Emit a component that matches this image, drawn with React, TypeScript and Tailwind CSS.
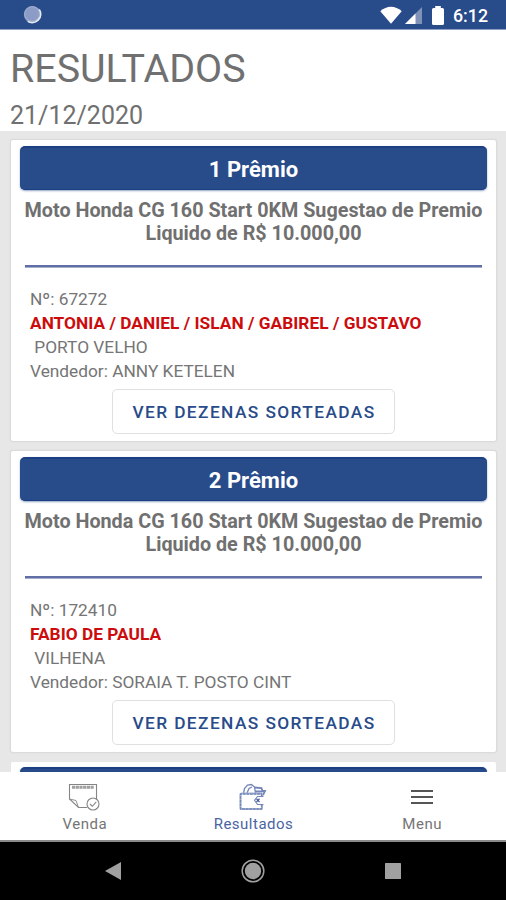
import type { ReactNode } from "react";

type Premio = {
  titulo: string;
  descricao: string[];
  numero: string;
  ganhador: string;
  cidade: string;
  vendedor: string;
};

const premios: Premio[] = [
  {
    titulo: "1 Prêmio",
    descricao: ["Moto Honda CG 160 Start 0KM Sugestao de Premio", "Liquido de R$ 10.000,00"],
    numero: "67272",
    ganhador: "ANTONIA / DANIEL / ISLAN / GABIREL / GUSTAVO",
    cidade: "PORTO VELHO",
    vendedor: "ANNY KETELEN",
  },
  {
    titulo: "2 Prêmio",
    descricao: ["Moto Honda CG 160 Start 0KM Sugestao de Premio", "Liquido de R$ 10.000,00"],
    numero: "172410",
    ganhador: "FABIO DE PAULA",
    cidade: "VILHENA",
    vendedor: "SORAIA T. POSTO CINT",
  },
];

function StatusBar() {
  return (
    <div className="flex h-[30px] shrink-0 items-center justify-between border-b border-[#8f9fc6] bg-[#284b8a] pl-[23px] pr-[18px] text-white">
      <svg width="19" height="19" viewBox="0 0 19 19">
        <circle cx="9.5" cy="9.5" r="8.6" fill="#8b9cc6" />
        <path d="M16.2 4.5A8.4 8.4 0 0 1 4.8 16.3" fill="none" stroke="#e6eaf4" strokeWidth="1.8" />
        <circle cx="9" cy="9" r="7.4" fill="none" stroke="#a9b6d5" strokeWidth="0.8" />
      </svg>
      <div className="flex items-center pt-px">
        <svg width="22" height="18" viewBox="0 0 22 18" fill="#fff">
          <path d="M0.3 5.2C6.5-.8 15.5-.8 21.7 5.2L11 17.8Z" />
        </svg>
        <svg className="ml-[3px]" width="17" height="18" viewBox="0 0 17 18">
          <path d="M0 18L17 1V18Z" fill="#8192b9" />
          <path d="M0 18L10.5 7.5V18Z" fill="#fff" />
        </svg>
        <svg className="ml-[10px]" width="12" height="19" viewBox="0 0 12 19" fill="#fff">
          <path d="M3.2 0H8.8V2H10.5Q12 2 12 3.5V17.5Q12 19 10.5 19H1.5Q0 19 0 17.5V3.5Q0 2 1.5 2H3.2Z" />
        </svg>
        <span className="ml-[9px] pt-px text-[17.8px] font-medium leading-[20px]">6:12</span>
      </div>
    </div>
  );
}

function Banner({ children }: { children?: ReactNode }) {
  return (
    <div className="flex h-[44px] items-center justify-center rounded-[5px] border-t-2 border-b border-t-[#1c3f83] border-b-[#1c3f83] bg-[#284b8a] pt-px text-[22px] font-bold text-white shadow-[0_1px_2px_rgba(40,75,138,0.5)]">
      {children}
    </div>
  );
}

function PremioCard({ premio }: { premio: Premio }) {
  return (
    <section className="h-[301px] shrink-0 rounded-[2px] bg-white px-[9px] pt-[6px] shadow-[0_0_2px_1px_rgba(0,0,0,0.07)]">
      <Banner>{premio.titulo}</Banner>
      <h2 className="mt-[9px] whitespace-nowrap text-center text-[19.75px] font-bold leading-[23px] text-[#707070]">
        {premio.descricao.map((linha) => (
          <span key={linha} className="block">{linha}</span>
        ))}
      </h2>
      <div className="mx-[5px] mt-[20px] h-[3px] border-b border-[#a5aecb] bg-[#5f6fa6]" />
      <div className="mt-[19px] whitespace-pre pl-[10px] text-[17.3px] leading-[24px] text-[#757575]">
        <p>Nº: {premio.numero}</p>
        <p className="font-bold tracking-[0.03px] text-[#cc0c0c]">{premio.ganhador}</p>
        <p> {premio.cidade}</p>
        <p>Vendedor: {premio.vendedor}</p>
      </div>
      <button className="mx-auto mt-[6px] flex h-[45px] w-[283px] items-center justify-center rounded-[5px] border border-[#e0e0e0] pl-px pt-[2px] text-[17.3px] font-medium tracking-[1.42px] text-[#284b8a]">
        VER DEZENAS SORTEADAS
      </button>
    </section>
  );
}

function VendaIcon() {
  return (
    <svg width="32" height="28" viewBox="0 0 32 28" fill="none" stroke="#858585" strokeWidth="1.1">
      <path d="M19 24.5H10.5L1.5 16V1.5H28.5V16" />
      <path d="M1.5 16L8 17.5L10.5 24.5" strokeWidth="0.9" />
      <path d="M4 4.3H26" strokeWidth="3" strokeDasharray="3.2 0.5" stroke="#a0a0a0" />
      <circle cx="25" cy="21" r="6" fill="#fff" />
      <path d="M22 21L24.3 23.3L28.3 18.8" />
    </svg>
  );
}

function ResultadosIcon() {
  return (
    <svg width="28" height="28" viewBox="0 0 28 28" fill="none" stroke="#7486b8" strokeWidth="1.3">
      <path d="M4.5 10L5.5 5.5L8.5 2L12.5 1.5L15.5 4L16.5 10M8 10L10 5.5L13 4" />
      <path d="M15.5 4.5L22.5 5L23.5 8H26L24 12M16 8.5H23.5" strokeWidth="1.8" />
      <rect x="1.5" y="10.5" width="21.5" height="15.5" rx="1.5" stroke="#a3b0d0" strokeWidth="2" />
      <path d="M22.5 13V11H1.5V26H22.5V22" strokeWidth="1.4" strokeDasharray="2.6 1" />
      <path d="M24.5 13.5H18.5L15.5 17.3L18.5 21.5H24.5" fill="#fff" strokeWidth="1.1" />
      <path d="M17.5 15.8L20.5 19M20.5 15.8L17.5 19" stroke="#4b639f" />
    </svg>
  );
}

function MenuIcon() {
  return (
    <svg width="22" height="28" viewBox="0 0 22 28" stroke="#555" strokeWidth="2">
      <path d="M0 8H22M0 14H22M0 20H22" />
    </svg>
  );
}

const tabs = [
  { label: "Venda", icon: <VendaIcon />, active: false },
  { label: "Resultados", icon: <ResultadosIcon />, active: true },
  { label: "Menu", icon: <MenuIcon />, active: false },
];

export default function App() {
  return (
    <div className="flex h-[900px] w-[506px] flex-col overflow-hidden bg-white font-['Roboto',sans-serif]">
      <StatusBar />

      <header className="h-[101px] shrink-0 pl-[10px] pt-[16px] text-[#707070]">
        <h1 className="text-[39.4px] leading-[46px]">RESULTADOS</h1>
        <p className="mt-[9px] text-[25px] leading-[30px]">21/12/2020</p>
      </header>

      <main className="flex h-[641px] shrink-0 flex-col gap-[10px] overflow-hidden bg-[#e7e7e7] pl-[11px] pr-[10px] pt-[9px]">
        {premios.map((premio) => (
          <PremioCard key={premio.titulo} premio={premio} />
        ))}
        {/* próximo card, cortado pela barra inferior */}
        <section className="h-[301px] shrink-0 rounded-[2px] bg-white px-[9px] pt-[5px]">
          <Banner />
        </section>
      </main>

      <nav className="grid h-[70px] shrink-0 grid-cols-3 border-b-2 border-[#8a8a8a] bg-white">
        {tabs.map((tab) => (
          <div
            key={tab.label}
            className={`flex flex-col items-center pt-[11px] text-[15px] leading-[20px] tracking-[0.5px] ${
              tab.active ? "text-[#4a64a3]" : "text-[#757575]"
            }`}
          >
            {tab.icon}
            <span className="mt-[3px] pl-px">{tab.label}</span>
          </div>
        ))}
      </nav>

      {/* botões do sistema */}
      <div className="flex flex-1 items-center justify-between bg-black pl-[105px] pr-[105px]">
        <svg width="16" height="18" viewBox="0 0 16 18" fill="#a0a0a0">
          <path d="M0 9L16 0V18Z" />
        </svg>
        <svg width="24" height="24" viewBox="0 0 24 24">
          <circle cx="12" cy="12" r="10.8" fill="none" stroke="#a0a0a0" strokeWidth="1.5" />
          <circle cx="12" cy="12" r="8.2" fill="#a0a0a0" />
        </svg>
        <svg width="16" height="16" viewBox="0 0 16 16" fill="#a0a0a0">
          <rect width="16" height="16" rx="0.5" />
        </svg>
      </div>
    </div>
  );
}
